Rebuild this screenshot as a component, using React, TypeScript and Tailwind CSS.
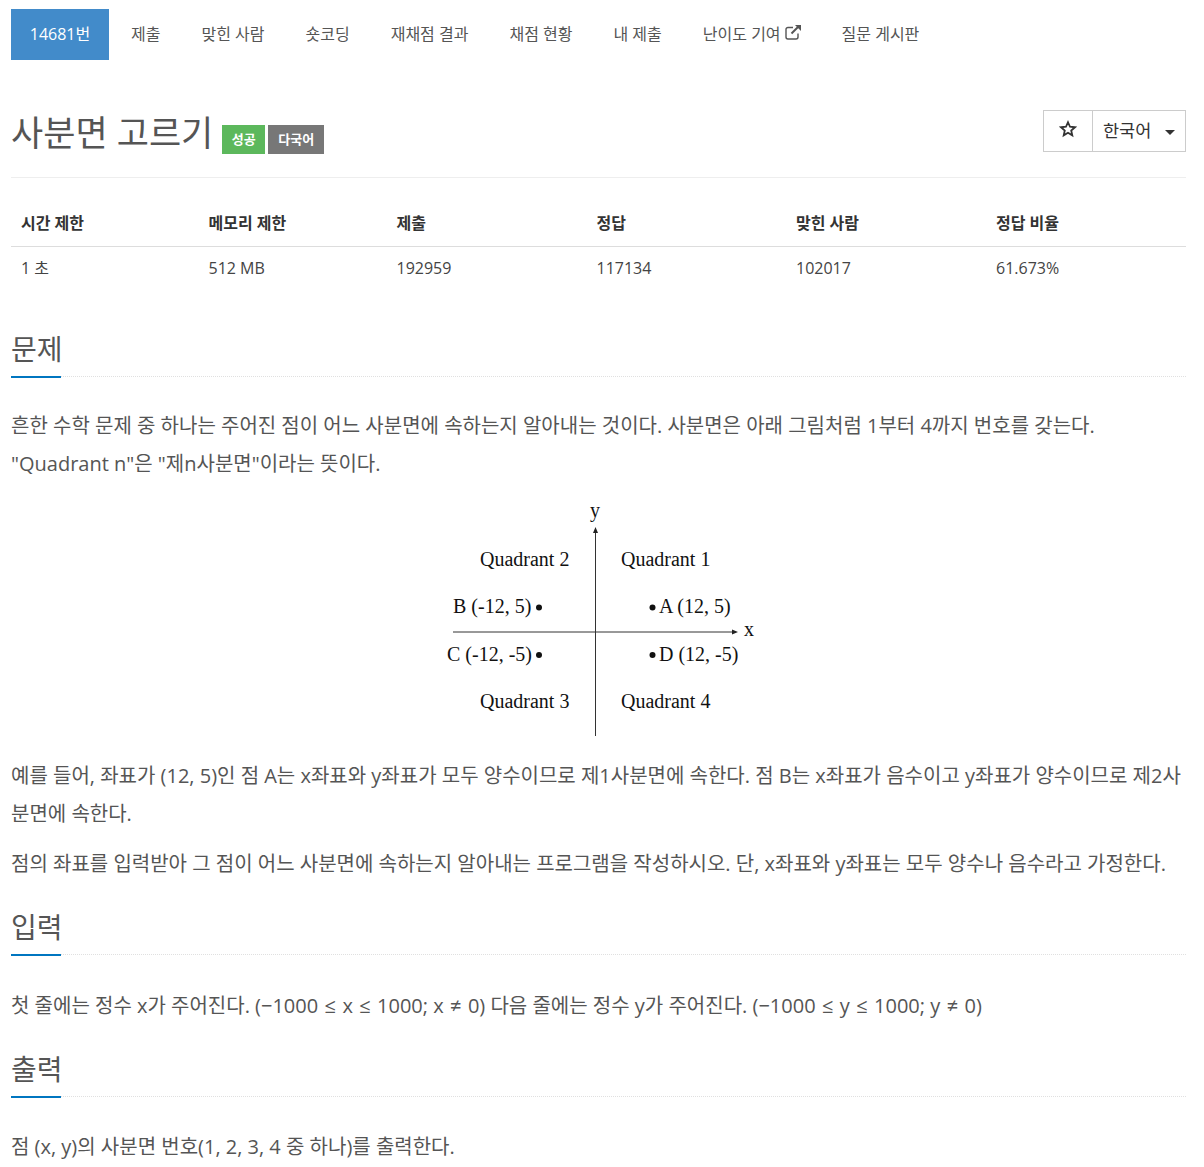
const font = 'font-["Open_Sans","Noto_Sans_CJK_KR",sans-serif]';

const navItems = ['제출', '맞힌 사람', '숏코딩', '재채점 결과', '채점 현황', '내 제출'];

const stats = [
  { label: '시간 제한', value: '1 초', width: 'w-[187.5px]' },
  { label: '메모리 제한', value: '512 MB', width: 'w-[188px]' },
  { label: '제출', value: '192959', width: 'w-[200px]' },
  { label: '정답', value: '117134', width: 'w-[199.5px]' },
  { label: '맞힌 사람', value: '102017', width: 'w-[200px]' },
  { label: '정답 비율', value: '61.673%', width: 'flex-1' },
];

function NavLink({ children }: { children: React.ReactNode }) {
  return (
    <a className="flex h-[51px] items-center px-[20.5px] pb-[2px] text-[16px] text-[#555]">
      {children}
    </a>
  );
}

function SectionTitle({ children }: { children: React.ReactNode }) {
  return (
    <div className="relative h-[47px] border-b border-dotted border-[#e0e0e0]">
      <h2 className="pt-[1px] text-[28px] leading-[36px] font-normal text-[#555]">{children}</h2>
      <span className="absolute bottom-[-2px] left-0 h-[2px] w-[50px] bg-[#0076c0]" />
    </div>
  );
}

// the math signs sit a bit wider in the original
function Sym({ children }: { children: React.ReactNode }) {
  return <span className="mx-[1.2px]">{children}</span>;
}

function ExternalLinkIcon() {
  return (
    <svg className="mb-[3px] ml-[4px]" width="16" height="16" viewBox="0 0 16 16" fill="none" stroke="#555">
      <path d="M8 3.5H3a2 2 0 0 0-2 2v7.5a2 2 0 0 0 2 2h8a2 2 0 0 0 2-2V9.5" strokeWidth="1.4" />
      <path d="M6.5 9.5 13.5 2.5" strokeWidth="2" />
      <path d="M10 1h6v6z" fill="#555" stroke="none" />
    </svg>
  );
}

function QuadrantDiagram() {
  const labels: [number, number, string][] = [
    [480, 566, 'Quadrant 2'],
    [621, 566, 'Quadrant 1'],
    [453, 613, 'B (-12, 5)'],
    [659, 613, 'A (12, 5)'],
    [447, 661, 'C (-12, -5)'],
    [659, 661, 'D (12, -5)'],
    [480, 708, 'Quadrant 3'],
    [621, 708, 'Quadrant 4'],
    [590, 517, 'y'],
    [744, 636, 'x'],
  ];
  return (
    <svg className="mx-auto block" width="340" height="250" viewBox="429 495 340 250">
      <g fontFamily="'Liberation Serif', serif" fontSize="20" fill="#111">
        {labels.map(([x, y, text]) => (
          <text key={text} x={x} y={y}>
            {text}
          </text>
        ))}
      </g>
      <path d="M595.5 530V736M453 632H735" stroke="#333" strokeWidth="1" fill="none" />
      <path d="M595.5 527l-2.5 6h5zM738 632l-6-2.5v5z" fill="#222" />
      <circle cx="539" cy="607.5" r="3" fill="#111" />
      <circle cx="652.5" cy="607.5" r="3" fill="#111" />
      <circle cx="539" cy="655" r="3" fill="#111" />
      <circle cx="652.5" cy="655" r="3" fill="#111" />
    </svg>
  );
}

export default function App() {
  return (
    <div className={`${font} min-h-[1167px] overflow-hidden bg-white pr-[18px] pl-[11px] text-[#333]`}>
      {/* Tabs */}
      <nav className="flex pt-[9px]">
        <a className="mr-[1.5px] flex h-[51px] w-[98px] items-center justify-center bg-[#428bca] pb-[2px] text-[16px] text-white">
          14681번
        </a>
        {navItems.map((item) => (
          <NavLink key={item}>{item}</NavLink>
        ))}
        <NavLink>
          난이도 기여
          <ExternalLinkIcon />
        </NavLink>
        <NavLink>질문 게시판</NavLink>
      </nav>

      {/* Title */}
      <div className="mt-[50px] flex h-[68px] items-start justify-between border-b border-[#eee]">
        <div className="flex items-start">
          <h1 className="mt-[2px] text-[35px] leading-[42px] font-normal text-[#555]">사분면 고르기</h1>
          <span className="mt-[15px] ml-[9px] flex h-[29px] w-[43px] items-center justify-center bg-[#5cb85c] text-[13px] font-bold text-white">
            성공
          </span>
          <span className="mt-[15px] ml-[3px] flex h-[29px] w-[56px] items-center justify-center bg-[#777] text-[13px] font-bold text-white">
            다국어
          </span>
        </div>
        <div className="flex h-[42px] border border-[#ccc] text-[#333]">
          <button className="flex w-[49px] items-center justify-center border-r border-[#ccc] pb-[4px]">
            <svg width="18" height="18" viewBox="0 0 24 24" fill="none" stroke="#333" strokeWidth="2.4">
              <path d="M12 3l2.7 6 6.5.7-4.9 4.3 1.4 6.4L12 17l-5.7 3.4 1.4-6.4-4.9-4.3 6.5-.7z" />
            </svg>
          </button>
          <button className="flex w-[92px] items-center pb-[2px] pl-[10px] text-[17.5px]">
            한국어
            <span className="mt-[5px] ml-[14px] h-0 w-0 border-x-[5px] border-t-[5px] border-x-transparent border-t-[#333]" />
          </button>
        </div>
      </div>

      {/* Stats table */}
      <div className="mt-[24px] flex h-[45px] items-center border-b border-[#ddd] text-[16px] font-bold">
        {stats.map((s) => (
          <div key={s.label} className={`${s.width} pb-[3px] pl-[10px]`}>
            {s.label}
          </div>
        ))}
      </div>
      <div className="flex h-[43px] items-center text-[16px] text-[#444]">
        {stats.map((s) => (
          <div key={s.label} className={`${s.width} pb-[2px] pl-[10px]`}>
            {s.value}
          </div>
        ))}
      </div>

      {/* Problem */}
      <section className="mt-[40px]">
        <SectionTitle>문제</SectionTitle>
        <div className="mt-[30px] text-[20px] leading-[38px] text-[#555]">
          <p>
            흔한 수학 문제 중 하나는 주어진 점이 어느 사분면에 속하는지 알아내는 것이다. 사분면은 아래 그림처럼 1부터 4까지 번호를 갖는다.
            <br />
            "Quadrant n"은 "제n사분면"이라는 뜻이다.
          </p>
          <div className="mt-[12px] mb-[12px]">
            <QuadrantDiagram />
          </div>
          <p>
            예를 들어, 좌표가 (12, 5)인 점 A는 x좌표와 y좌표가 모두 양수이므로 제1사분면에 속한다. 점 B는 x좌표가 음수이고 y좌표가 양수이므로 제2사분면에 속한다.
          </p>
          <p className="mt-[12px]">
            점의 좌표를 입력받아 그 점이 어느 사분면에 속하는지 알아내는 프로그램을 작성하시오. 단, x좌표와 y좌표는 모두 양수나 음수라고 가정한다.
          </p>
        </div>
      </section>

      {/* Input */}
      <section className="mt-[25px]">
        <SectionTitle>입력</SectionTitle>
        <p className="mt-[32px] text-[20px] leading-[38px] text-[#555]">
          첫 줄에는 정수 x가 주어진다. (−1000 <Sym>≤</Sym> x <Sym>≤</Sym> 1000; x <Sym>≠</Sym> 0) 다음 줄에는 정수 y가 주어진다. (−1000 <Sym>≤</Sym> y <Sym>≤</Sym> 1000; y <Sym>≠</Sym> 0)
        </p>
      </section>

      {/* Output */}
      <section className="mt-[25px]">
        <SectionTitle>출력</SectionTitle>
        <p className="mt-[31px] text-[20px] leading-[38px] text-[#555]">
          점 (x, y)의 사분면 번호(1, 2, 3, 4 중 하나)를 출력한다.
        </p>
      </section>
    </div>
  );
}
